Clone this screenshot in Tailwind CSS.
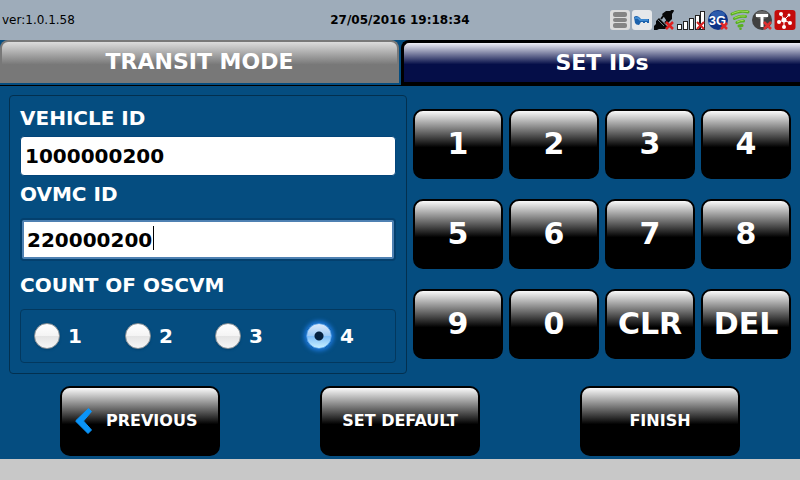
<!DOCTYPE html>
<html lang="en">
<head>
<meta charset="utf-8">
<meta name="viewport" content="width=device-width, initial-scale=1">
<title>Set IDs</title>
<script src="https://cdn.jsdelivr.net/npm/@tailwindcss/browser@4"></script>
</head>
<body class="flex min-h-screen flex-col bg-[#c8c8c8] font-['DejaVu_Sans',sans-serif] text-white">

<header class="grid h-10 grid-cols-3 items-center bg-[#9eacba] text-xs text-black">
  <span class="pl-0.5">ver:1.0.1.58</span>
  <time class="text-center font-bold" datetime="2016-05-27T19:18:34">27/05/2016 19:18:34</time>
  <div class="flex justify-end gap-0.5 pr-1">
    <!-- database -->
    <svg class="size-5" viewBox="0 0 20 20" aria-hidden="true"><rect width="20" height="20" rx="3" fill="#dcdcdc"/><g fill="#848484"><rect x="3" y="2" width="14" height="5" rx="2"/><rect x="3" y="8" width="14" height="4" rx="2"/><rect x="3" y="13" width="14" height="5" rx="2"/></g></svg>
    <!-- key -->
    <svg class="size-5" viewBox="0 0 20 20" aria-hidden="true"><rect width="20" height="20" rx="3" fill="#e6e8ea"/><path d="M2 7q2-2 5 0l2 2h8v4h-2v-1h-2v1h-2v-1H9l-2 3q-3 0-4-2z" fill="#1c62ac"/><path d="M3 8h3l2 2h8" fill="none" stroke="#4a96dc" stroke-width="1.500"/></svg>
    <!-- unplugged connector -->
    <svg class="size-5" viewBox="0 0 20 20" aria-hidden="true"><path d="M0 20v-4l2-2V11l3-3 9 9-3 2H5l-2 1z" fill="#080808"/><path d="M8 4l4-3h4l3-2 1 2-2 3v5l-4 4z" fill="#080808"/><path d="M7 9l3-4M11 13l4-4" stroke="#080808" stroke-width="2"/><path d="M4 10l6 6" stroke="#707a84"/><path d="M12 12l7 7M19 12l-7 7" stroke="#e02020" stroke-width="2.5"/></svg>
    <!-- signal bars -->
    <svg class="h-5 w-[30px]" viewBox="0 0 30 20" aria-hidden="true"><g fill="#fff" stroke="#222"><rect x="1.500" y="14.500" width="4" height="5"/><rect x="7.500" y="11.500" width="4" height="8"/><rect x="13.500" y="8.500" width="4" height="11"/><rect x="19.500" y="5.500" width="4" height="14"/><rect x="24.500" y="1.500" width="4" height="18"/></g><path d="M21 12l7 7M28 12l-7 7" stroke="#d82020" stroke-width="2"/></svg>
    <!-- mobile data -->
    <svg class="size-5" viewBox="0 0 20 20" aria-hidden="true"><circle cx="10" cy="10" r="10" fill="#0c3488"/><ellipse cx="10" cy="4.500" rx="7" ry="3.500" fill="#2c5cac"/><text x="9.500" y="14.500" text-anchor="middle" font-family="Liberation Sans" font-weight="bold" font-size="13" fill="#fff">3G</text><path d="M13 13l6 6M19 13l-6 6" stroke="#e02828" stroke-width="2.500"/></svg>
    <!-- wireless -->
    <svg class="size-5" viewBox="0 0 20 20" aria-hidden="true"><g fill="none" stroke="#58b020" stroke-width="3" stroke-linecap="round"><path d="M2 4q8-4 16-2M4.500 8.500q6-3 11-2M7 12.500q4-2 6.500-1.500M9 16l3-.5"/></g><path d="M2 3.500q8-4 16-2M4.500 8q6-3 11-2M7 12q4-2 6.500-1.500" fill="none" stroke="#a0dc58"/><circle cx="10.500" cy="18.700" r="1.300" fill="#58b020"/></svg>
    <!-- terminal -->
    <svg class="size-5" viewBox="0 0 20 20" aria-hidden="true"><circle cx="10" cy="10" r="10" fill="#404040"/><ellipse cx="10" cy="5" rx="7" ry="4" fill="#686868"/><path d="M4 4h12v3h-4.500v10h-3V7H4z" fill="#fff"/><path d="M12 12l7 7M19 12l-7 7" stroke="#e03030" stroke-width="2.500"/></svg>
    <!-- network hub -->
    <svg class="h-5 w-[22px]" viewBox="0 0 22 20" aria-hidden="true"><rect x=".5" width="21" height="20" rx="3" fill="#c40a0a"/><path d="M10 10L7 4M10 10l5-5M10 10l6 3M10 10v7M10 10l-5 2" stroke="#fff"/><g fill="#fff"><circle cx="10" cy="10" r="2.500"/><circle cx="7" cy="4" r="2"/><circle cx="15" cy="5" r="1.500"/><circle cx="16" cy="13" r="2"/><circle cx="10" cy="17" r="2"/><circle cx="5" cy="12" r="2"/></g></svg>
  </div>
</header>

<main class="bg-[#054d80]">
  <nav class="grid grid-cols-2 border-b border-black text-[22px] font-bold">
    <button type="button" class="mr-px mb-0.5 h-[43px] rounded-t-lg border-2 border-b-0 border-[#787878] bg-linear-to-b/srgb from-[#dcdcdc] to-[#787878] to-55% pb-0.5">TRANSIT MODE</button>
    <button type="button" class="ml-px h-[45px] rounded-tl-lg border-3 border-r-0 border-black bg-linear-to-b/srgb from-[#f0f0f8] to-[#050e48] to-55%">SET IDs</button>
  </nav>

  <div class="grid grid-cols-[398fr_378fr] gap-1.5 pt-[9px] pr-[9px] pl-[9px]">
    <form class="flex flex-col rounded border border-[#03304f] px-2.5 pb-2.5 text-xl/6 font-bold">
      <label for="vehicle" class="pt-2.5">VEHICLE ID</label>
      <input id="vehicle" value="1000000200" class="mt-1.5 h-10 w-full rounded-sm border border-[#03457a] bg-white px-1 text-black outline-none">
      <label for="ovmc" class="mt-1.5">OVMC ID</label>
      <div class="relative mt-3 rounded border-2 border-[#04406e]">
        <input id="ovmc" value="220000200" class="block h-[39px] w-full rounded-xs border-2 border-[#4f81b2] bg-white px-[3px] text-black outline-none">
        <span class="absolute top-1.5 left-[131px] h-6 w-px bg-black" aria-hidden="true"></span>
      </div>
      <fieldset class="mt-3">
        <legend>COUNT OF OSCVM</legend>
        <div class="mt-3 flex h-[54px] items-center rounded border border-[#03385e] pl-[13px]">
          <label class="flex w-[91px] items-center gap-2"><input type="radio" name="count" class="size-[26px] appearance-none rounded-full border border-[#8d9296] bg-[linear-gradient(#ffffff,#f4f4f4_50%,#e4e4e4_50%,#f6f6f6)] shadow-sm checked:border-[#4a9cf0] checked:bg-[radial-gradient(circle,#04203e_4px,transparent_5px),linear-gradient(#dceafa,#9ccaf6_50%,#7cbcf8_50%,#c8f0ff)] checked:shadow-[0_0_4px_2px_#1c78dc]">1</label>
          <label class="flex w-[90px] items-center gap-2"><input type="radio" name="count" class="size-[26px] appearance-none rounded-full border border-[#8d9296] bg-[linear-gradient(#ffffff,#f4f4f4_50%,#e4e4e4_50%,#f6f6f6)] shadow-sm checked:border-[#4a9cf0] checked:bg-[radial-gradient(circle,#04203e_4px,transparent_5px),linear-gradient(#dceafa,#9ccaf6_50%,#7cbcf8_50%,#c8f0ff)] checked:shadow-[0_0_4px_2px_#1c78dc]">2</label>
          <label class="flex w-[91px] items-center gap-2"><input type="radio" name="count" class="size-[26px] appearance-none rounded-full border border-[#8d9296] bg-[linear-gradient(#ffffff,#f4f4f4_50%,#e4e4e4_50%,#f6f6f6)] shadow-sm checked:border-[#4a9cf0] checked:bg-[radial-gradient(circle,#04203e_4px,transparent_5px),linear-gradient(#dceafa,#9ccaf6_50%,#7cbcf8_50%,#c8f0ff)] checked:shadow-[0_0_4px_2px_#1c78dc]">3</label>
          <label class="flex items-center gap-2"><input type="radio" name="count" checked class="size-[26px] appearance-none rounded-full border border-[#8d9296] bg-[linear-gradient(#ffffff,#f4f4f4_50%,#e4e4e4_50%,#f6f6f6)] shadow-sm checked:border-[#4a9cf0] checked:bg-[radial-gradient(circle,#04203e_4px,transparent_5px),linear-gradient(#dceafa,#9ccaf6_50%,#7cbcf8_50%,#c8f0ff)] checked:shadow-[0_0_4px_2px_#1c78dc]">4</label>
        </div>
      </fieldset>
    </form>

    <div class="grid grid-cols-4 content-start gap-x-1.5 gap-y-5 pt-3.5 text-3xl font-bold">
      <button type="button" class="h-[70px] rounded-[10px] border-2 border-black bg-linear-to-b/srgb from-[#fafafa] to-black to-55%">1</button>
      <button type="button" class="h-[70px] rounded-[10px] border-2 border-black bg-linear-to-b/srgb from-[#fafafa] to-black to-55%">2</button>
      <button type="button" class="h-[70px] rounded-[10px] border-2 border-black bg-linear-to-b/srgb from-[#fafafa] to-black to-55%">3</button>
      <button type="button" class="h-[70px] rounded-[10px] border-2 border-black bg-linear-to-b/srgb from-[#fafafa] to-black to-55%">4</button>
      <button type="button" class="h-[70px] rounded-[10px] border-2 border-black bg-linear-to-b/srgb from-[#fafafa] to-black to-55%">5</button>
      <button type="button" class="h-[70px] rounded-[10px] border-2 border-black bg-linear-to-b/srgb from-[#fafafa] to-black to-55%">6</button>
      <button type="button" class="h-[70px] rounded-[10px] border-2 border-black bg-linear-to-b/srgb from-[#fafafa] to-black to-55%">7</button>
      <button type="button" class="h-[70px] rounded-[10px] border-2 border-black bg-linear-to-b/srgb from-[#fafafa] to-black to-55%">8</button>
      <button type="button" class="h-[70px] rounded-[10px] border-2 border-black bg-linear-to-b/srgb from-[#fafafa] to-black to-55%">9</button>
      <button type="button" class="h-[70px] rounded-[10px] border-2 border-black bg-linear-to-b/srgb from-[#fafafa] to-black to-55%">0</button>
      <button type="button" class="h-[70px] rounded-[10px] border-2 border-black bg-linear-to-b/srgb from-[#fafafa] to-black to-55%">CLR</button>
      <button type="button" class="h-[70px] rounded-[10px] border-2 border-black bg-linear-to-b/srgb from-[#fafafa] to-black to-55%">DEL</button>
    </div>
  </div>

  <div class="flex justify-between px-[60px] pt-3 pb-[3px] text-base font-bold">
    <button type="button" class="flex h-[70px] w-40 items-center gap-3 rounded-[10px] border-2 border-black bg-linear-to-b/srgb from-[#fafafa] to-black to-55% pl-3">
      <svg class="h-7 w-5" viewBox="0 0 20 28" aria-hidden="true"><path d="M14.500 1.500L17.500 4.500 9.500 14l8 9-3.500 3.500L2 14.500v-1z" fill="#0a94f8" stroke="#0a94f8" stroke-linejoin="round"/></svg>PREVIOUS</button>
    <button type="button" class="h-[70px] w-40 rounded-[10px] border-2 border-black bg-linear-to-b/srgb from-[#fafafa] to-black to-55%">SET DEFAULT</button>
    <button type="button" class="h-[70px] w-40 rounded-[10px] border-2 border-black bg-linear-to-b/srgb from-[#fafafa] to-black to-55%">FINISH</button>
  </div>
</main>
</body>
</html>
